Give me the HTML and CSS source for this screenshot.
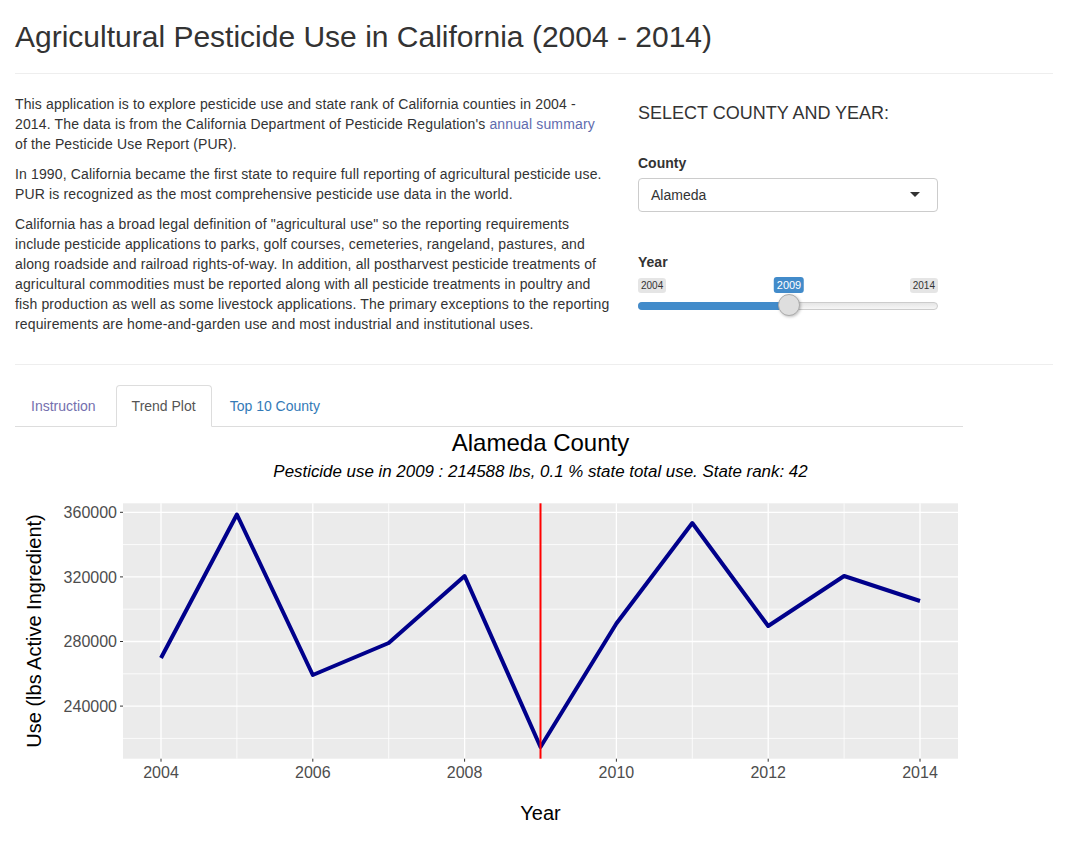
FILE: index.html
```html
<!DOCTYPE html>
<html lang="en">
<head>
<meta charset="utf-8">
<title>Agricultural Pesticide Use in California (2004 - 2014)</title>
<link rel="stylesheet" href="styles.css">
</head>
<body>
<div class="container">
  <h2 class="page-title">Agricultural Pesticide Use in California (2004 - 2014)</h2>
  <hr class="divider">
  <div class="row">
    <div class="col-intro">
      <p>This application is to explore pesticide use and state rank of California counties in 2004 - 2014. The data is from the California Department of Pesticide Regulation's <a class="link" href="#">annual summary</a> of the Pesticide Use Report (PUR).</p>
      <p>In 1990, California became the first state to require full reporting of agricultural pesticide use. PUR is recognized as the most comprehensive pesticide use data in the world.</p>
      <p>California has a broad legal definition of "agricultural use" so the reporting requirements include pesticide applications to parks, golf courses, cemeteries, rangeland, pastures, and along roadside and railroad rights-of-way. In addition, all postharvest pesticide treatments of agricultural commodities must be reported along with all pesticide treatments in poultry and fish production as well as some livestock applications. The primary exceptions to the reporting requirements are home-and-garden use and most industrial and institutional uses.</p>
    </div>
    <div class="col-controls">
      <h4 class="controls-title">SELECT COUNTY AND YEAR:</h4>
      <div class="form-group county-group">
        <label class="control-label">County</label>
        <div class="select-box">
          <span class="select-value">Alameda</span>
          <span class="select-caret"></span>
        </div>
      </div>
      <div class="form-group year-group">
        <label class="control-label">Year</label>
        <div class="slider">
          <div class="slider-labels">
            <span class="irs-minmax">2004</span>
            <span class="irs-minmax">2014</span>
          </div>
          <div class="slider-track">
            <div class="slider-fill" style="width:151px"></div>
          </div>
          <span class="irs-single" style="left:151px">2009</span>
          <span class="irs-handle" style="left:140px"></span>
        </div>
      </div>
    </div>
  </div>
  <hr class="divider">
  <div class="main-panel">
    <ul class="nav-tabs">
      <li><a class="tab tab-visited tab-first" href="#">Instruction</a></li>
      <li><a class="tab tab-active" href="#">Trend Plot</a></li>
      <li><a class="tab" href="#">Top 10 County</a></li>
    </ul>
    <div class="tab-content">
      <svg class="plot" width="948" height="400" viewBox="0 0 948 400" xmlns="http://www.w3.org/2000/svg">
        <rect x="0" y="0" width="948" height="400" fill="#ffffff"/>
        <text class="plot-title" x="525.5" y="24" text-anchor="middle">Alameda County</text>
        <text class="plot-subtitle" x="525.5" y="50" text-anchor="middle">Pesticide use in 2009 : 214588 lbs, 0.1 % state total use. State rank: 42</text>
        <!-- panel -->
        <rect x="108" y="76.3" width="835" height="255.4" fill="#EBEBEB"/>
        <!-- minor grid -->
        <g stroke="#ffffff" stroke-width="0.8">
          <line x1="108" x2="943" y1="117.6" y2="117.6"/>
          <line x1="108" x2="943" y1="182.2" y2="182.2"/>
          <line x1="108" x2="943" y1="246.8" y2="246.8"/>
          <line x1="108" x2="943" y1="311.4" y2="311.4"/>
          <line y1="76.3" y2="331.7" x1="221.9" x2="221.9"/>
          <line y1="76.3" y2="331.7" x1="373.7" x2="373.7"/>
          <line y1="76.3" y2="331.7" x1="525.5" x2="525.5"/>
          <line y1="76.3" y2="331.7" x1="677.3" x2="677.3"/>
          <line y1="76.3" y2="331.7" x1="829.1" x2="829.1"/>
        </g>
        <!-- major grid -->
        <g stroke="#ffffff" stroke-width="1.3">
          <line x1="108" x2="943" y1="85.3" y2="85.3"/>
          <line x1="108" x2="943" y1="149.9" y2="149.9"/>
          <line x1="108" x2="943" y1="214.5" y2="214.5"/>
          <line x1="108" x2="943" y1="279.1" y2="279.1"/>
          <line y1="76.3" y2="331.7" x1="146" x2="146"/>
          <line y1="76.3" y2="331.7" x1="297.8" x2="297.8"/>
          <line y1="76.3" y2="331.7" x1="449.6" x2="449.6"/>
          <line y1="76.3" y2="331.7" x1="601.4" x2="601.4"/>
          <line y1="76.3" y2="331.7" x1="753.2" x2="753.2"/>
          <line y1="76.3" y2="331.7" x1="905" x2="905"/>
        </g>
        <!-- data line -->
        <polyline fill="none" stroke="#00008B" stroke-width="4" stroke-linejoin="round" stroke-linecap="butt"
          points="146,231 221.9,87.5 297.8,248 373.7,216 449.6,149 525.5,320 601.4,196.5 677.3,96 753.2,199 829.1,149 905,174"/>
        <line x1="525.5" x2="525.5" y1="76.3" y2="331.7" stroke="#FF0000" stroke-width="2"/>
        <!-- ticks -->
        <g stroke="#333333" stroke-width="1">
          <line x1="105" x2="108" y1="85.3" y2="85.3"/>
          <line x1="105" x2="108" y1="149.9" y2="149.9"/>
          <line x1="105" x2="108" y1="214.5" y2="214.5"/>
          <line x1="105" x2="108" y1="279.1" y2="279.1"/>
          <line y1="331.7" y2="334.7" x1="146" x2="146"/>
          <line y1="331.7" y2="334.7" x1="297.8" x2="297.8"/>
          <line y1="331.7" y2="334.7" x1="449.6" x2="449.6"/>
          <line y1="331.7" y2="334.7" x1="601.4" x2="601.4"/>
          <line y1="331.7" y2="334.7" x1="753.2" x2="753.2"/>
          <line y1="331.7" y2="334.7" x1="905" x2="905"/>
        </g>
        <g class="axis-text" text-anchor="end">
          <text x="102" y="91">360000</text>
          <text x="102" y="155.6">320000</text>
          <text x="102" y="220.2">280000</text>
          <text x="102" y="284.8">240000</text>
        </g>
        <g class="axis-text" text-anchor="middle">
          <text x="146" y="351">2004</text>
          <text x="297.8" y="351">2006</text>
          <text x="449.6" y="351">2008</text>
          <text x="601.4" y="351">2010</text>
          <text x="753.2" y="351">2012</text>
          <text x="905" y="351">2014</text>
        </g>
        <text class="axis-title" x="525.5" y="393" text-anchor="middle">Year</text>
        <text class="axis-title" transform="translate(25.5,204) rotate(-90)" text-anchor="middle">Use (lbs Active Ingredient)</text>
      </svg>
    </div>
  </div>
</div>
</body>
</html>
```

FILE: styles.css
```css
* {
  box-sizing: border-box;
}

html, body {
  margin: 0;
  padding: 0;
  background: #ffffff;
}

body {
  font-family: "Liberation Sans", Arial, Helvetica, sans-serif;
  font-size: 14px;
  line-height: 20px;
  color: #333333;
}

.container {
  padding: 0 15px;
}

.page-title {
  font-size: 30px;
  font-weight: 500;
  line-height: 33px;
  margin: 20px 0 10px;
  color: #333333;
}

.divider {
  border: 0;
  border-top: 1px solid #eeeeee;
  margin: 20px 0;
  height: 0;
}

.row {
  display: flex;
  align-items: flex-start;
}

.col-intro {
  flex: none;
  width: 623px;
  padding-right: 28px;
}

.col-intro p {
  margin: 0 0 10px;
  letter-spacing: 0.14px;
}

.link {
  color: #5f6cae;
  text-decoration: none;
}

.col-controls {
  flex: none;
  width: 300px;
}

.controls-title {
  font-size: 18px;
  font-weight: 500;
  line-height: 19.8px;
  margin: 10px 0 10px;
  color: #333333;
}

.form-group {
  margin: 0;
}

.county-group {
  margin-top: 29px;
}

.year-group {
  margin-top: 40px;
}

.control-label {
  display: block;
  font-weight: bold;
  margin-bottom: 5px;
}

.select-box {
  display: flex;
  align-items: center;
  justify-content: space-between;
  height: 34px;
  padding: 6px 12px;
  border: 1px solid #cccccc;
  border-radius: 4px;
  background: #ffffff;
  color: #333333;
}

.select-caret {
  width: 0;
  height: 0;
  border-style: solid;
  border-width: 5px 5px 0;
  border-color: #333333 transparent transparent;
  margin-right: 5px;
}

.slider {
  position: relative;
  height: 40px;
}

.slider-labels {
  display: flex;
  justify-content: space-between;
  height: 25px;
  align-items: flex-start;
  padding-top: 1px;
}

.irs-minmax {
  font-size: 10px;
  line-height: 13.3px;
  padding: 1px 3px;
  background: rgba(0, 0, 0, 0.1);
  border-radius: 3px;
  color: #333333;
}

.slider-track {
  height: 8px;
  border: 1px solid #cccccc;
  border-radius: 8px;
  background: linear-gradient(to bottom, #dddddd -50%, #ffffff 150%);
}

.slider-fill {
  height: 8px;
  margin: -1px 0 0 -1px;
  background: #428bca;
  border-radius: 8px 0 0 8px;
}

.irs-single {
  position: absolute;
  top: 0;
  transform: translateX(-50%);
  font-size: 11px;
  line-height: 14.6px;
  padding: 1px 3px;
  background: #428bca;
  color: #ffffff;
  border-radius: 3px;
}

.irs-handle {
  position: absolute;
  top: 17px;
  width: 22px;
  height: 22px;
  border: 1px solid #ababab;
  border-radius: 50%;
  background: #dedede;
  box-shadow: 1px 1px 3px rgba(0, 0, 0, 0.25);
}

.main-panel {
  width: 948px;
}

.nav-tabs {
  display: flex;
  list-style: none;
  margin: 0;
  padding: 0;
  border-bottom: 1px solid #dddddd;
}

.nav-tabs li {
  margin-bottom: -1px;
}

.tab {
  display: block;
  padding: 10px 15px;
  line-height: 20px;
  margin-right: 2px;
  border: 1px solid transparent;
  border-radius: 4px 4px 0 0;
  color: #337ab7;
  text-decoration: none;
}

.tab-first {
  padding-right: 17px;
}

.tab-visited {
  color: #7470ae;
}

.tab-active {
  color: #555555;
  background: #ffffff;
  border-color: #dddddd #dddddd transparent;
}

.tab-content {
  padding: 0;
}

.plot {
  display: block;
  font-family: "Liberation Sans", Arial, Helvetica, sans-serif;
}

.plot-title {
  font-size: 24px;
  fill: #000000;
}

.plot-subtitle {
  font-size: 16.9px;
  font-style: italic;
  fill: #000000;
}

.axis-text {
  font-size: 16px;
  fill: #4D4D4D;
}

.axis-title {
  font-size: 20px;
  fill: #000000;
}
```
